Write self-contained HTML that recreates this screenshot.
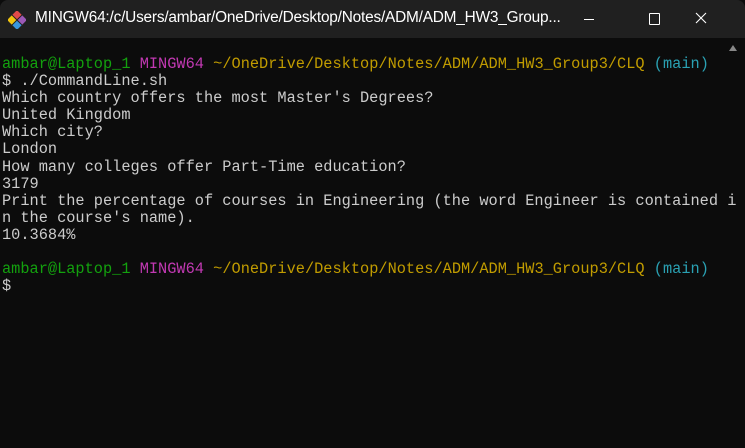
<!DOCTYPE html>
<html><head><style>
html,body{margin:0;padding:0;width:745px;height:448px;overflow:hidden;background:#0c0c0c}
.tb{position:absolute;left:0;top:0;width:745px;height:38px;background:#202020;border-radius:8px 8px 0 0;}
.title{position:absolute;left:35px;top:9px;font:15.4px "Liberation Sans",sans-serif;color:#fff;letter-spacing:-0.2px}
.term{position:absolute;left:0;top:38px;width:745px;height:410px;background:#0c0c0c}
pre{position:absolute;left:2px;top:56px;margin:0;font:15.3px/17.1px "Liberation Mono",monospace;color:#cccccc}
.g{color:#13a10e}.p{color:#c239b3}.y{color:#c19c00}.c{color:#2aa1b3}
</style></head><body>
<div class="tb">
<svg style="position:absolute;left:8px;top:11px" width="18" height="18" viewBox="0 0 18 18">
<g transform="rotate(45 9 9)"><rect x="2" y="2" width="6.5" height="6.5" fill="#e24a4a"/><rect x="9.5" y="2" width="6.5" height="6.5" fill="#9b59b6"/><rect x="2" y="9.5" width="6.5" height="6.5" fill="#f1c40f"/><rect x="9.5" y="9.5" width="6.5" height="6.5" fill="#3a96dd"/></g></svg>
<div class="title">MINGW64:/c/Users/ambar/OneDrive/Desktop/Notes/ADM/ADM_HW3_Group...</div>
<div style="position:absolute;left:584px;top:19px;width:10px;height:1px;background:#fff"></div>
<div style="position:absolute;left:649px;top:13px;width:9px;height:10px;border:1px solid #fff;border-radius:1px"></div>
<svg style="position:absolute;top:12px;left:695px" width="12" height="12"><path d="M1 1L11 11M11 1L1 11" stroke="#fff" stroke-width="1.1"/></svg>
</div>
<div class="term"></div>
<div style="position:absolute;left:729px;top:45px;width:0;height:0;border-left:4px solid transparent;border-right:4px solid transparent;border-bottom:6px solid #888"></div>
<pre><span class="g">ambar@Laptop_1</span> <span class="p">MINGW64</span> <span class="y">~/OneDrive/Desktop/Notes/ADM/ADM_HW3_Group3/CLQ</span> <span class="c">(main)</span>
$ ./CommandLine.sh
Which country offers the most Master's Degrees?
United Kingdom
Which city?
London
How many colleges offer Part-Time education?
3179
Print the percentage of courses in Engineering (the word Engineer is contained i
n the course's name).
10.3684%

<span class="g">ambar@Laptop_1</span> <span class="p">MINGW64</span> <span class="y">~/OneDrive/Desktop/Notes/ADM/ADM_HW3_Group3/CLQ</span> <span class="c">(main)</span>
$</pre>
</body></html>
